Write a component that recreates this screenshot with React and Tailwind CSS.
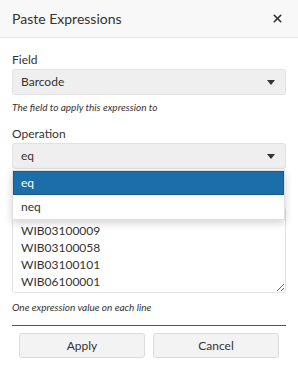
import React from 'react';
import { X } from 'lucide-react';

const values = ['WIB03100009', 'WIB03100058', 'WIB03100101', 'WIB06100001'];

function Caret() {
  return (
    <svg width="8" height="5" viewBox="0 0 8 5" className="text-[#333]">
      <path d="M0 0 L8 0 L4 5 Z" fill="currentColor" />
    </svg>
  );
}

function FakeSelect({ value }) {
  return (
    <div className="h-[26px] rounded-[3px] border border-[#e2e2e2] bg-[#efefef] flex items-center justify-between pl-[8px] pr-[10px] text-[12px] text-[#333]">
      <span>{value}</span>
      <Caret />
    </div>
  );
}

export default function App() {
  return (
    <div
      className="w-[298px] h-[379px] bg-white flex flex-col text-[#333]"
      style={{ fontFamily: 'Lato, "Open Sans", sans-serif' }}
    >
      <div className="h-[38px] bg-[#f8f8f8] border-b border-[#e6e6e6] flex items-center justify-between pl-[12px] pr-[14px] shrink-0">
        <span className="text-[14px] text-[#333]">Paste Expressions</span>
        <X size={13} strokeWidth={3} className="text-[#333]" />
      </div>

      <div className="px-[12px] flex flex-col">
        <div className="mt-[14px] text-[12px] leading-[16px]">Field</div>
        <div className="mt-[1px]">
          <FakeSelect value="Barcode" />
        </div>
        <div className="mt-[5px] text-[10px] italic leading-[14px]">The field to apply this expression to</div>

        <div className="mt-[12px] text-[12px] leading-[16px]">Operation</div>
        <div className="relative mt-[1px]">
          <FakeSelect value="eq" />
          <div className="absolute left-0 right-[1px] top-[27px] z-10 bg-white shadow-[0_3px_8px_rgba(0,0,0,0.18)] border border-[#e0e0e0] text-[12px]">
            <div className="h-[24px] bg-[#1b6ea8] border border-[#155b8c] text-white flex items-center pl-[7px]">eq</div>
            <div className="h-[24px] flex items-center pl-[8px] text-[#333]">neq</div>
          </div>
        </div>

        <textarea
          readOnly
          defaultValue={values.join('\n')}
          className="mt-[38px] h-[86px] w-full rounded-[3px] border border-[#e2e2e2] px-[8px] pt-[14px] pb-[2px] text-[12px] leading-[17px] text-[#333] outline-none resize-y overflow-hidden"
          style={{ fontFamily: 'Lato, "Open Sans", sans-serif' }}
        />
        <div className="mt-[7px] text-[10px] italic leading-[14px]">One expression value on each line</div>

        <div className="mt-[11px] border-t border-[#555]" />
        <div className="mt-[7px] px-[7px] grid grid-cols-2 gap-[8px]">
          <button className="h-[25px] rounded-[3px] border border-[#dcdcdc] bg-[#f3f3f3] text-[12px] text-[#333]">Apply</button>
          <button className="h-[25px] rounded-[3px] border border-[#dcdcdc] bg-[#f3f3f3] text-[12px] text-[#333]">Cancel</button>
        </div>
      </div>
    </div>
  );
}
